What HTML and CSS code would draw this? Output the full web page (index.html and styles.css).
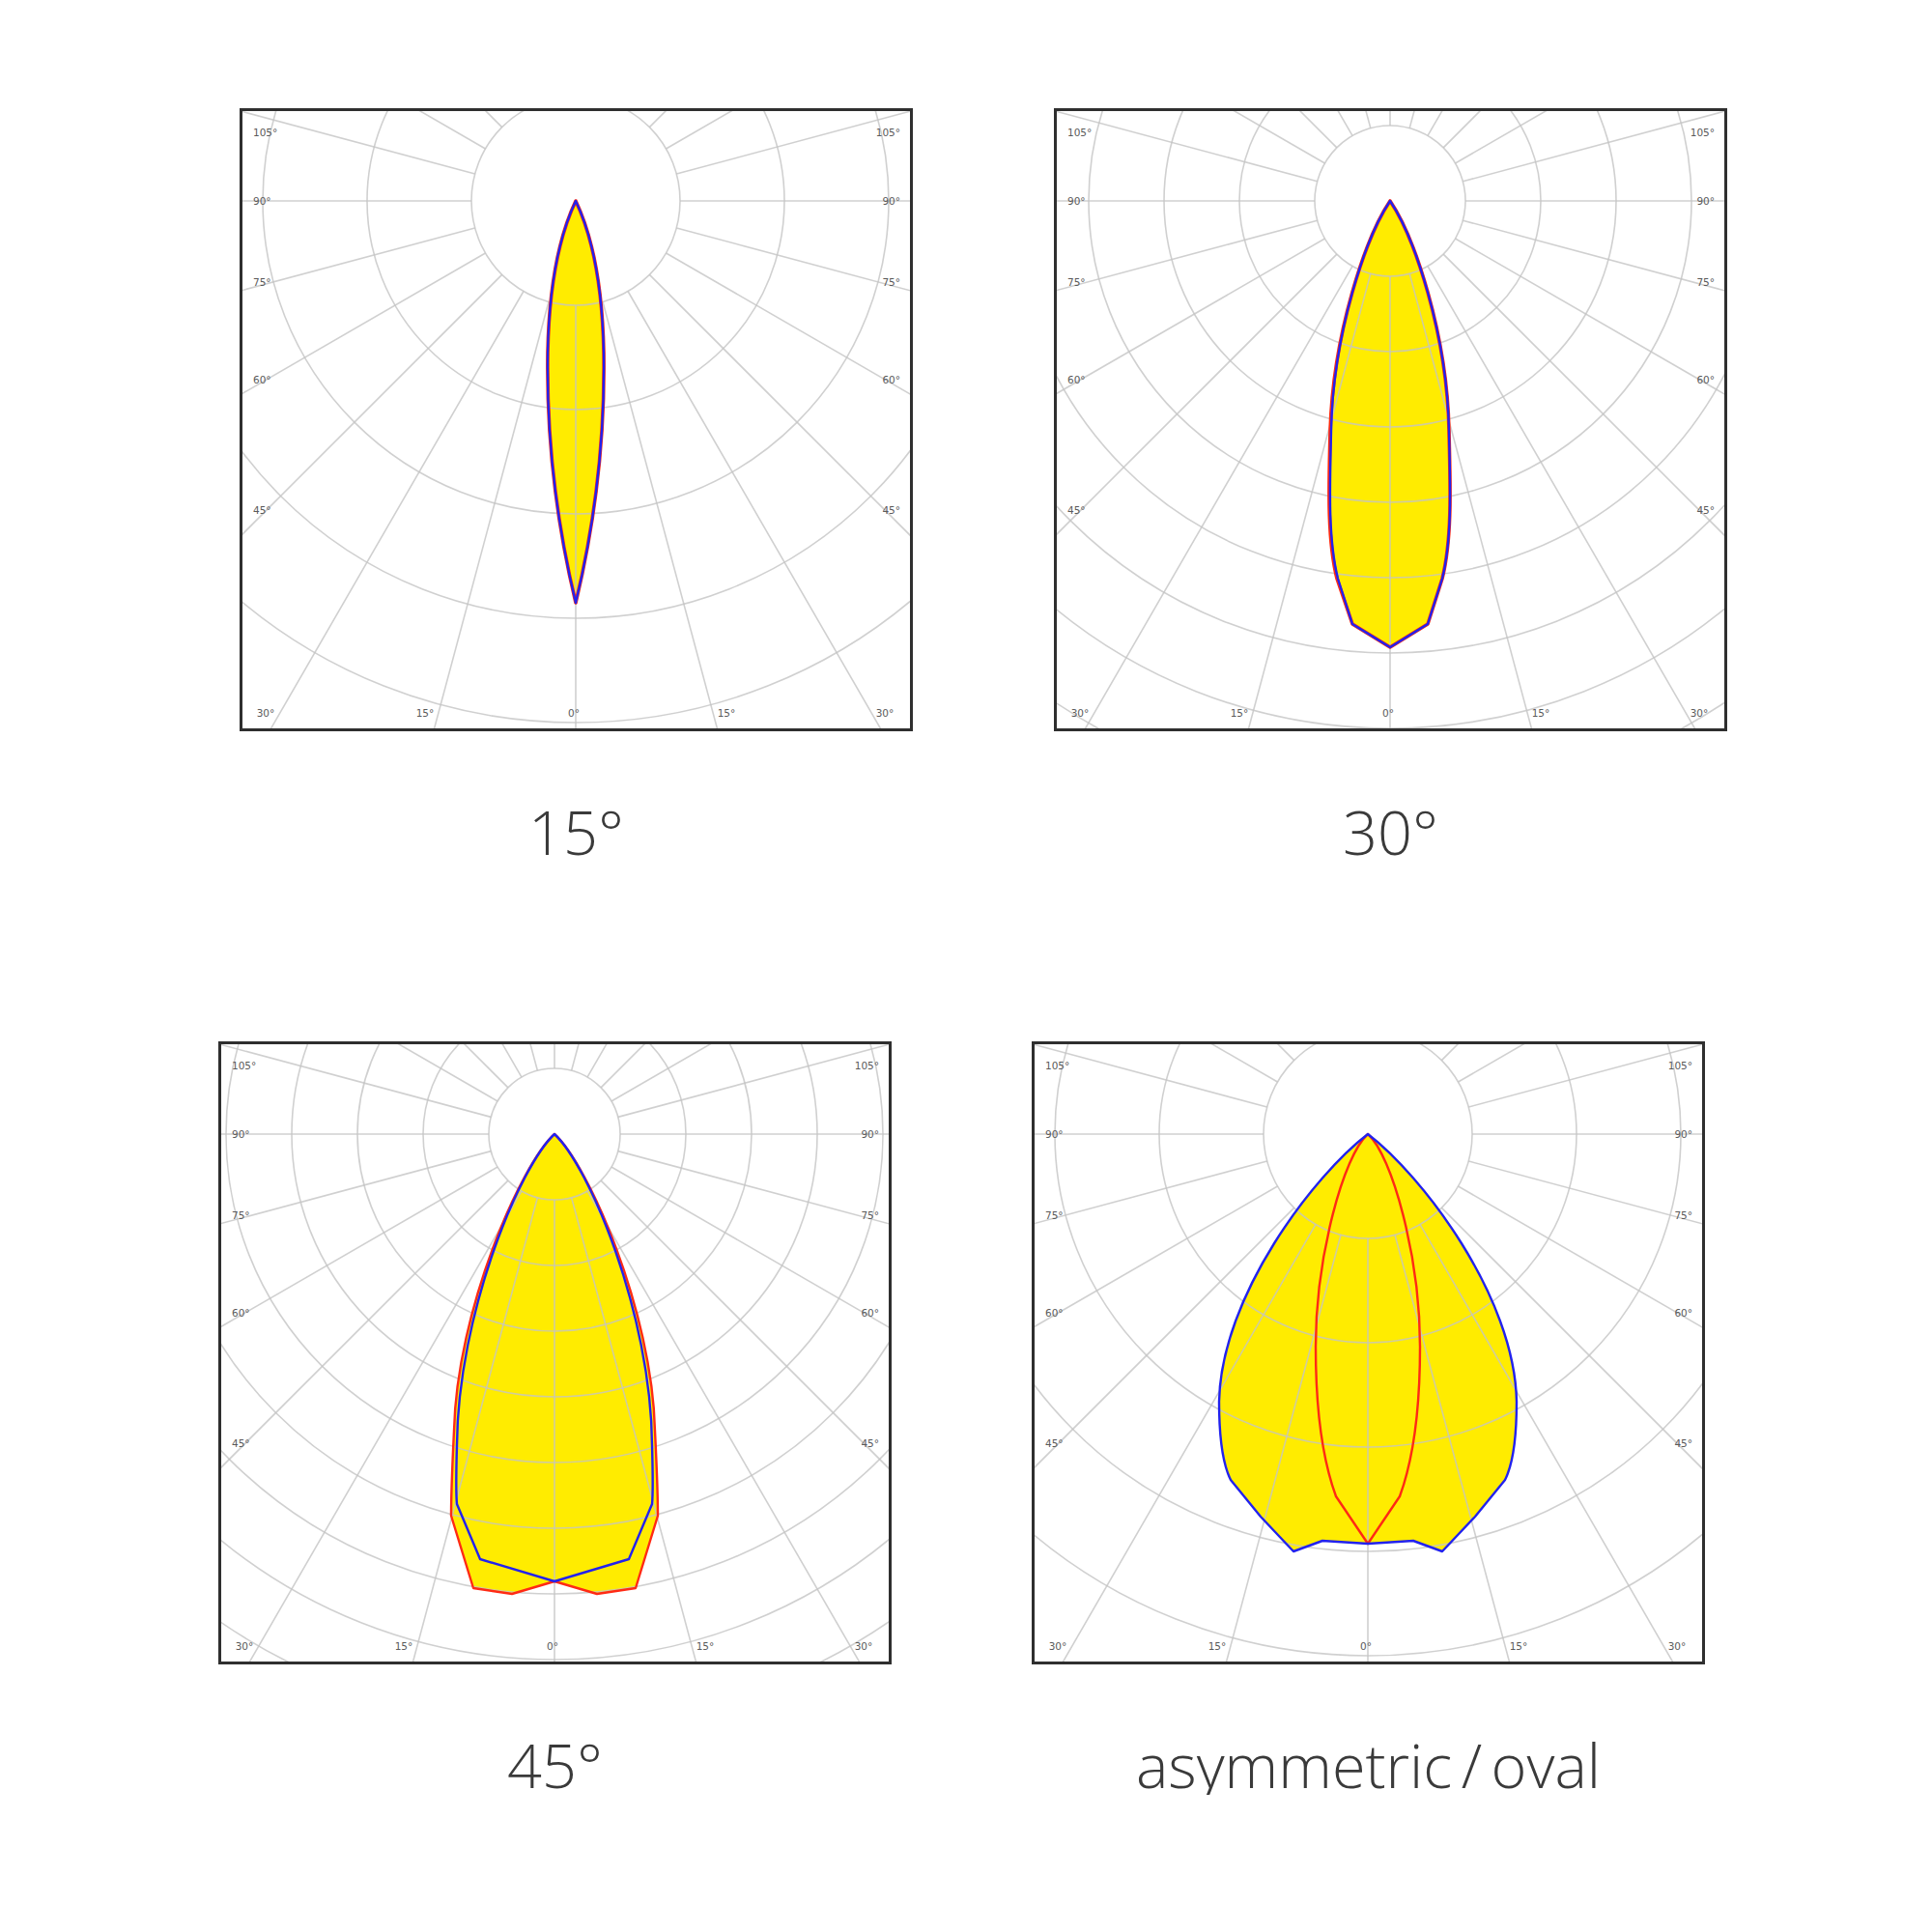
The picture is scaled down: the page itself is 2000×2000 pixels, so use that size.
FILE: index.html
```html
<!DOCTYPE html>
<html lang="en">
<head>
<meta charset="utf-8">
<title>Beam angles</title>
<link rel="stylesheet" href="styles.css">
</head>
<body>
<div class="sheet">
  <div class="row row-a">
    <figure class="cell">
      <svg class="chart" viewBox="0 0 691 639">
        <defs>
          <g id="rays">
            <line x1="0" y1="0" x2="0" y2="900"/>
            <line x1="0" y1="0" x2="233" y2="869"/>
            <line x1="0" y1="0" x2="450" y2="779"/>
            <line x1="0" y1="0" x2="636" y2="636"/>
            <line x1="0" y1="0" x2="779" y2="450"/>
            <line x1="0" y1="0" x2="869" y2="233"/>
            <line x1="0" y1="0" x2="900" y2="0"/>
            <line x1="0" y1="0" x2="869" y2="-233"/>
            <line x1="0" y1="0" x2="779" y2="-450"/>
            <line x1="0" y1="0" x2="636" y2="-636"/>
            <line x1="0" y1="0" x2="450" y2="-779"/>
            <line x1="0" y1="0" x2="233" y2="-869"/>
            <line x1="0" y1="0" x2="0" y2="-900"/>
            <line x1="0" y1="0" x2="-233" y2="-869"/>
            <line x1="0" y1="0" x2="-450" y2="-779"/>
            <line x1="0" y1="0" x2="-636" y2="-636"/>
            <line x1="0" y1="0" x2="-779" y2="-450"/>
            <line x1="0" y1="0" x2="-869" y2="-233"/>
            <line x1="0" y1="0" x2="-900" y2="0"/>
            <line x1="0" y1="0" x2="-869" y2="233"/>
            <line x1="0" y1="0" x2="-779" y2="450"/>
            <line x1="0" y1="0" x2="-636" y2="636"/>
            <line x1="0" y1="0" x2="-450" y2="779"/>
            <line x1="0" y1="0" x2="-233" y2="869"/>
          </g>
          <g id="labels">
            <text class="ax" x="11" y="26">105°</text>
            <text class="ax" x="11" y="97">90°</text>
            <text class="ax" x="11" y="181">75°</text>
            <text class="ax" x="11" y="282">60°</text>
            <text class="ax" x="11" y="417">45°</text>
            <text class="ax end" x="681" y="26">105°</text>
            <text class="ax end" x="681" y="97">90°</text>
            <text class="ax end" x="681" y="181">75°</text>
            <text class="ax end" x="681" y="282">60°</text>
            <text class="ax end" x="681" y="417">45°</text>
            <text class="ax mid" x="24" y="627">30°</text>
            <text class="ax mid" x="189" y="627">15°</text>
            <text class="ax mid" x="343" y="627">0°</text>
            <text class="ax mid" x="501" y="627">15°</text>
            <text class="ax mid" x="665" y="627">30°</text>
          </g>
        </defs>
        <path class="beam" d="M345,93 Q372,150 374,250 Q376,380 345,509 Q314,380 316,250 Q318,150 345,93 Z"/>
        <g class="grid" transform="translate(345,93)">
          <circle r="108"/><circle r="216"/><circle r="324"/><circle r="432"/><circle r="540"/><circle r="648"/>
          <use href="#rays" class="rays r108"/>
        </g>
        <path class="red thick" d="M345,93 Q372,150 374,250 Q376,380 345,509 Q314,380 316,250 Q318,150 345,93 Z"/>
        <path class="blue" d="M345,93 Q372,150 374,250 Q376,380 345,509 Q314,380 316,250 Q318,150 345,93 Z"/>
        <use href="#labels"/>
      </svg>
      <figcaption class="caption">15°</figcaption>
    </figure>
    <figure class="cell">
      <svg class="chart" viewBox="0 0 691 639">
        <path class="beam" d="M345,93 C370,130 404,230 406,331 C407,380 410,440 399,484 L384,531 L345,555 L306,531 L291,484 C280,440 283,380 284,331 C286,230 320,130 345,93 Z"/>
        <g class="grid" transform="translate(345,93)">
          <circle r="78"/><circle r="156"/><circle r="234"/><circle r="312"/><circle r="390"/><circle r="468"/><circle r="546"/><circle r="624"/><circle r="702"/>
          <use href="#rays" class="rays r78"/>
        </g>
        <path class="red thick" d="M345,93 C370,130 404,230 406,331 C407,380 410,440 399,484 L384,531 L345,555 L306,531 L290,484 C279,440 282,380 283,331 C286,230 320,130 345,93 Z"/>
        <path class="blue" d="M345,93 C370,130 404,230 406,331 C407,380 410,440 399,484 L384,531 L345,555 L306,531 L291,484 C280,440 283,380 284,331 C286,230 320,130 345,93 Z"/>
        <use href="#labels"/>
      </svg>
      <figcaption class="caption">30°</figcaption>
    </figure>
  </div>
  <div class="row row-b">
    <figure class="cell">
      <svg class="chart" viewBox="0 0 691 639">
        <path class="beam" d="M345,93 C380,125 446,275 449,400 C451,440 452,470 452,488 L429,563 L389,569 L345,556 L301,569 L261,563 L238,488 C238,470 239,440 241,400 C244,275 310,125 345,93 Z"/>
        <g class="grid" transform="translate(345,93)">
          <circle r="68"/><circle r="136"/><circle r="204"/><circle r="272"/><circle r="340"/><circle r="408"/><circle r="476"/><circle r="544"/><circle r="612"/><circle r="680"/>
          <use href="#rays" class="rays r68"/>
        </g>
        <path class="red" d="M345,93 C380,125 446,275 449,400 C451,440 452,470 452,488 L429,563 L389,569 L345,556 L301,569 L261,563 L238,488 C238,470 239,440 241,400 C244,275 310,125 345,93 Z"/>
        <path class="blue" d="M345,93 C380,125 445,278 446,415 C447,450 447,466 446,476 L422,533 L345,556 L268,533 L244,476 C243,466 243,450 244,415 C245,278 310,125 345,93 Z"/>
        <use href="#labels"/>
      </svg>
      <figcaption class="caption">45°</figcaption>
    </figure>
    <figure class="cell">
      <svg class="chart" viewBox="0 0 691 639">
        <path class="beam" d="M345,93 C400,135 497,260 499,370 C499,410 495,435 487,451 L456,489 L422,525 L392,514 L345,517 L298,514 L268,525 L234,489 L203,451 C195,435 191,410 191,370 C193,260 290,135 345,93 Z"/>
        <g class="grid" transform="translate(345,93)">
          <circle r="108"/><circle r="216"/><circle r="324"/><circle r="432"/><circle r="540"/><circle r="648"/>
          <use href="#rays" class="rays r108"/>
        </g>
        <path class="red" d="M345,93 C370,115 399,220 399,313 C399,380 392,430 378,468 L345,517 L312,468 C298,430 291,380 291,313 C291,220 320,115 345,93 Z"/>
        <path class="blue" d="M345,93 C400,135 497,260 499,370 C499,410 495,435 487,451 L456,489 L422,525 L392,514 L345,517 L298,514 L268,525 L234,489 L203,451 C195,435 191,410 191,370 C193,260 290,135 345,93 Z"/>
        <use href="#labels"/>
      </svg>
      <figcaption class="caption">asymmetric / oval</figcaption>
    </figure>
  </div>
</div>
</body>
</html>
```
FILE: styles.css
```css
html, body {
  margin: 0;
  padding: 0;
  background: #ffffff;
}

.sheet {
  padding-top: 112px;
}

.row {
  display: flex;
  align-items: flex-start;
}

.row-a {
  padding-left: 248px;
  gap: 146px;
}

.row-b {
  padding-left: 226px;
  gap: 145px;
  margin-top: 186px;
}

.cell {
  margin: 0;
  width: 697px;
  display: flex;
  flex-direction: column;
  align-items: center;
}

.chart {
  display: block;
  width: 691px;
  height: 639px;
  border: 3px solid #2f2f2f;
  background: #ffffff;
  overflow: hidden;
}

.caption {
  margin-top: 72px;
  font-family: "Open Sans", "DejaVu Sans", sans-serif;
  font-weight: 300;
  font-size: 63px;
  line-height: 1;
  word-spacing: -7px;
  color: #3a3a3a;
  white-space: nowrap;
}

.beam {
  fill: #ffec00;
  stroke: none;
}

.grid circle {
  fill: none;
  stroke: #c4c4c4;
  stroke-width: 1.6;
  stroke-opacity: 0.8;
}

.rays {
  fill: none;
  stroke: #c4c4c4;
  stroke-width: 1.6;
  stroke-opacity: 0.8;
}

.r108 { stroke-dasharray: 0 108 2000; }
.r78 { stroke-dasharray: 0 78 2000; }
.r68 { stroke-dasharray: 0 68 2000; }

.red {
  fill: none;
  stroke: #ff2a14;
  stroke-width: 2.4;
  stroke-linejoin: round;
}

.red.thick {
  stroke-width: 3.6;
}

.blue {
  fill: none;
  stroke: #2222ee;
  stroke-width: 2.4;
  stroke-linejoin: round;
}

.ax {
  font-family: "DejaVu Sans", sans-serif;
  font-size: 10.5px;
  fill: #5a5a5a;
}

.ax.end { text-anchor: end; }
.ax.mid { text-anchor: middle; }
```
